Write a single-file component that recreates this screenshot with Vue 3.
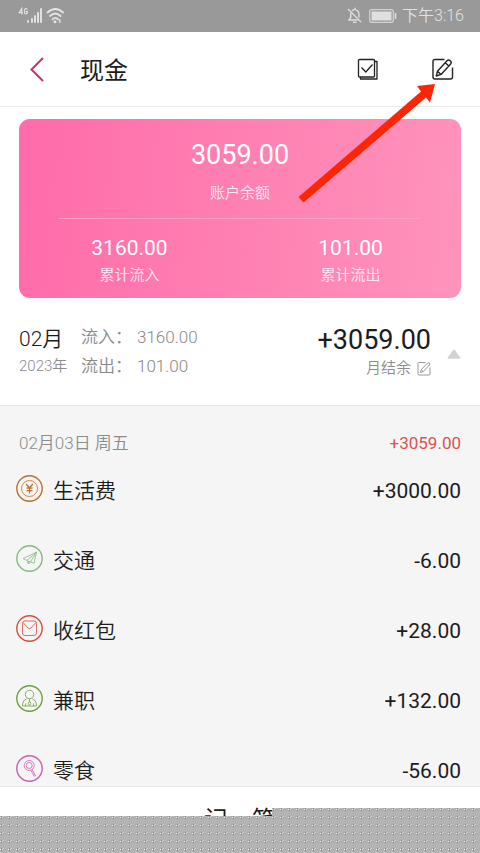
<script setup>
const account = { name: '现金', balance: '3059.00', inflow: '3160.00', outflow: '101.00' }
const month = { month: '02月', year: '2023年', inflow: '3160.00', outflow: '101.00', net: '+3059.00' }
const day = { date: '02月03日 周五', total: '+3059.00' }
const records = [
  { name: '生活费', amount: '+3000.00', icon: 'money', color: '#b9702f' },
  { name: '交通', amount: '-6.00', icon: 'plane', color: '#82bd7c' },
  { name: '收红包', amount: '+28.00', icon: 'envelope', color: '#d2503c' },
  { name: '兼职', amount: '+132.00', icon: 'person', color: '#6f9f42' },
  { name: '零食', amount: '-56.00', icon: 'candy', color: '#c85fb4' }
]
</script>

<template>
  <div class="screen">
    <div class="status">
      <div class="status-side">
        <svg width="48" height="20" viewBox="0 0 48 20" aria-hidden="true">
          <g fill="none" stroke="#e6e6e6" stroke-width="1.1">
            <path d="M3.8 8.5V2.5L1.2 6.8H5" />
            <path d="M9.2 3.6Q9 2.5 8 2.5Q6.6 2.5 6.6 4.2V6.3Q6.6 8 8 8Q9.4 8 9.4 6.2V5.6H8" />
          </g>
          <g fill="#e0e0e0">
            <rect x="9" y="14" width="2" height="3" rx="1" />
            <rect x="13" y="12" width="2" height="5" rx="1" />
            <rect x="16" y="9" width="2" height="8" rx="1" />
            <rect x="19" y="6" width="2" height="11" rx="1" />
            <rect x="22" y="2" width="2" height="15" rx="1" />
          </g>
          <g fill="none" stroke="#e6e6e6" stroke-width="1.8" stroke-linecap="round">
            <path d="M29.500 6.500Q37.500 -.5 45 6.500" />
            <path d="M32 10Q37.500 5 42.500 10" />
            <path d="M34.500 13.300Q37.500 10.500 40 13.300" />
          </g>
          <circle cx="37" cy="15.800" r="1.500" fill="#e6e6e6" />
          <path d="M41.800 13V17" stroke="#e0e0e0" stroke-width="1.400" />
        </svg>
      </div>
      <div class="status-side">
        <svg width="16" height="18" viewBox="0 0 16 18" fill="none" stroke="#dedede" stroke-width="1.400" aria-hidden="true">
          <path d="M1 2L14 15M5 3.600Q8 1.500 10.800 4Q12 5.200 12 8V10.500M3.700 6V10.500L2 13H10.500M6 15.200H9.500M8 .8V2.500" />
        </svg>
        <svg class="battery" width="28" height="14" viewBox="0 0 28 14" aria-hidden="true">
          <rect x=".7" y=".7" width="23.600" height="12.600" rx="2" fill="none" stroke="#d4d4d4" stroke-width="1.200" />
          <rect x="2.500" y="2.500" width="20" height="9" fill="#e0e0e0" />
          <path d="M26.500 4V10" stroke="#dedede" stroke-width="1.600" />
        </svg>
        <span class="clock">下午3:16</span>
      </div>
    </div>

    <header class="bar">
      <button class="icon-button" aria-label="返回">
        <svg width="16" height="26" viewBox="0 0 16 26" fill="none" stroke="#cf3160" stroke-width="2">
          <path d="M13 2L1.500 13.500L13 25" />
        </svg>
      </button>
      <h1 class="title">{{ account.name }}</h1>
      <button class="icon-button" aria-label="多选">
        <svg width="22" height="24" viewBox="0 0 22 24" fill="none" stroke="#222" stroke-width="1.300" stroke-linejoin="round">
          <rect x="1.500" y="2.500" width="16" height="17.500" rx="1" />
          <path d="M3.500 20V22H20V4.500H17.500M4.500 10.500L8.800 15L15.500 7.500" />
        </svg>
      </button>
      <button class="icon-button edit-button" aria-label="编辑账户">
        <svg width="22" height="24" viewBox="0 0 22 24" fill="none" stroke="#222" stroke-width="1.400" stroke-linejoin="round">
          <path d="M12.500 2.500H3Q1 2.500 1 4.500V20Q1 22 3 22H18.500Q20.500 22 20.500 20V10.500" />
          <path d="M4.300 19L5.500 14.200L15 3.800Q16.500 2.200 18.300 3.800Q20 5.200 18.700 7L9 17.400ZM5.500 14.200L9 17.400M13.300 5.700L16.800 9" />
        </svg>
      </button>
    </header>

    <section class="card-area">
      <div class="card">
        <strong class="balance">{{ account.balance }}</strong>
        <span class="card-label">账户余额</span>
        <div class="flows">
          <div class="flow">
            <strong class="flow-value">{{ account.inflow }}</strong>
            <span class="card-label">累计流入</span>
          </div>
          <div class="flow">
            <strong class="flow-value">{{ account.outflow }}</strong>
            <span class="card-label">累计流出</span>
          </div>
        </div>
      </div>
    </section>

    <section class="month">
      <div class="month-date">
        <span class="month-name">{{ month.month }}</span>
        <span class="small">{{ month.year }}</span>
      </div>
      <dl class="totals">
        <dt>流入：</dt>
        <dd>{{ month.inflow }}</dd>
        <dt>流出：</dt>
        <dd>{{ month.outflow }}</dd>
      </dl>
      <div class="net">
        <span class="net-value">{{ month.net }}</span>
        <button class="net-edit">
          月结余
          <svg width="14" height="15" viewBox="0 0 14 15" fill="none" stroke="#999" stroke-width="1" aria-hidden="true">
            <path d="M8.500 1.500H2Q1 1.500 1 2.500V13Q1 14 2 14H12Q13 14 13 13V6.500" />
            <path d="M3.500 11.500L4.300 8.700L10.500 2Q11.400 1.200 12.400 2Q13.300 2.800 12.500 3.800L6.300 10.600ZM4.300 8.700L6.300 10.600" />
          </svg>
        </button>
      </div>
      <button class="collapse" aria-label="收起">
        <svg width="14" height="10" viewBox="0 0 14 10" fill="#d2d2d2">
          <path d="M.8 8.500Q0 9.700 1.500 9.700H12.500Q14 9.700 13.200 8.500L8 1.200Q7 0 6 1.200Z" />
        </svg>
      </button>
    </section>

    <main class="records">
      <div class="day">
        <span>{{ day.date }}</span>
        <span class="day-total">{{ day.total }}</span>
      </div>
      <ul class="list">
        <li v-for="record in records" :key="record.name" class="record">
          <svg class="record-icon" width="27" height="27" viewBox="0 0 27 27" fill="none" :stroke="record.color" stroke-width=".8" stroke-linejoin="round" aria-hidden="true">
            <circle cx="13.500" cy="13.500" r="12.700" stroke-width="1.400" />
            <g v-if="record.icon === 'money'">
              <circle cx="13.500" cy="13.500" r="8" />
              <path d="M10.200 9L13.500 13L16.800 9M13.500 13V18.500M10.500 13.200H16.500M10.500 15.700H16.500" stroke-width="1.200" />
            </g>
            <path v-else-if="record.icon === 'plane'" d="M20.500 7.200L7 13.600L11 15.400L12.500 19L14.500 16.900L18 18.200ZM20.500 7.200L11 15.400M20.500 7.200L14.500 16.900L12.500 16.200V19" />
            <g v-else-if="record.icon === 'envelope'">
              <rect x="6.500" y="6" width="14" height="14.500" rx="2.500" />
              <path d="M7 7.500L12 13Q13.500 14.500 15 13L20 7.500" />
            </g>
            <g v-else-if="record.icon === 'person'">
              <circle cx="13.500" cy="9.500" r="4.200" />
              <path d="M10.800 13.800Q7 15 6.500 19V21H20.500V19Q20 15 16.200 13.800M13.500 14V15.500L12.300 18.500L13.500 20.500L14.700 18.500L13.500 15.500M9.500 21V18.500M17.500 21V18.500" />
            </g>
            <g v-else>
              <circle cx="13.200" cy="10.500" r="5" />
              <circle cx="13.200" cy="10.500" r="3" />
              <path d="M14.600 15.200L18.500 21.200L19.500 20.600L16 14.600" />
            </g>
          </svg>
          <span class="record-name">{{ record.name }}</span>
          <span class="record-amount">{{ record.amount }}</span>
        </li>
      </ul>
    </main>

    <footer class="footer">
      <button class="add">记一笔</button>
      <svg class="mask" width="100%" height="45" aria-hidden="true">
        <defs>
          <pattern id="grain" width="8" height="8" patternUnits="userSpaceOnUse">
            <rect width="8" height="8" fill="#b2b2b2" />
            <path d="M0 1h1v1h-1zM2 1h1v1h-1zM3 0h1v1h-1z" fill="#dedede" />
            <path d="M1 0h1v1h-1zM1 2h1v1h-1zM3 1h1v1h-1z" fill="#8c8c8c" />
            <path d="M4 4h1v1h-1zM6 4h1v1h-1zM5 5h1v1h-1zM7 5h1v1h-1zM4 6h1v1h-1zM6 6h1v1h-1zM1 5h1v1h-1zM5 1h1v1h-1z" fill="#b9b9b9" />
          </pattern>
        </defs>
        <rect y="8" width="272" height="37" fill="url(#grain)" />
        <rect x="272" width="100%" height="45" fill="url(#grain)" />
      </svg>
    </footer>

    <svg class="arrow" width="140" height="122" viewBox="0 0 140 122" aria-hidden="true">
      <path d="M138 2L133 20.500L129 15.500L6.500 120.500L1.500 115L124 9.500L120 4Z" fill="#fd2604" />
    </svg>
  </div>
</template>

<style>
body {
  margin: 0;
}
</style>

<style scoped>
.screen {
  position: relative;
  display: flex;
  flex-direction: column;
  height: 100vh;
  overflow: hidden;
  background: #fff;
  color: #1c1c1c;
  font-family: Roboto, "Noto Sans CJK SC", sans-serif;
  font-weight: 400;
}

svg {
  display: block;
  flex: none;
}

button {
  padding: 0;
  border: 0;
  background: none;
  color: inherit;
  font: inherit;
  cursor: pointer;
}

strong {
  font-weight: 400;
}

.status {
  display: flex;
  justify-content: space-between;
  align-items: center;
  height: 32px;
  padding: 0 16px 0 18px;
  background: #999;
}

.status-side {
  display: flex;
  align-items: center;
}

.battery {
  margin: 0 5px 0 6px;
}

.clock {
  color: #e2e2e2;
  font-size: 16px;
  font-weight: 350;
  line-height: 24px;
}

.bar {
  display: flex;
  align-items: center;
  height: 74px;
  padding: 0 26px 0 30px;
  border-bottom: 1px solid #ececec;
}

.title {
  flex: 1;
  margin: 0 0 0 34px;
  padding-top: 3px;
  font-size: 24px;
  font-weight: 400;
  line-height: 32px;
}

.edit-button {
  margin-left: 53px;
}

.card-area {
  padding: 12px 19px 0;
}

.card {
  display: flex;
  flex-direction: column;
  align-items: center;
  padding: 18px 0 11px;
  border-radius: 11px;
  background: linear-gradient(95deg, #ff6ba9, #fe94bb);
  color: #fff;
}

.balance {
  font-size: 27px;
  line-height: 36px;
}

.card-label {
  color: #ffe6f2;
  font-size: 15px;
  font-weight: 350;
  line-height: 24px;
}

.balance + .card-label {
  margin-top: 8px;
}

.flows {
  position: relative;
  display: flex;
  align-self: stretch;
  margin-top: 13px;
  padding-top: 15px;
}

.flows::before {
  content: "";
  position: absolute;
  top: 0;
  left: 40px;
  right: 40px;
  height: 1px;
  background: #ff9dc9;
}

.flow {
  display: flex;
  flex: 1;
  flex-direction: column;
  align-items: center;
}

.flow-value {
  font-size: 21px;
  line-height: 30px;
}

.month {
  display: flex;
  align-items: flex-start;
  height: 82px;
  padding: 25px 19px 0;
  border-bottom: 1px solid #e6e6e6;
}

.month-date {
  display: flex;
  flex-direction: column;
  width: 62px;
}

.month-name {
  font-size: 21px;
  font-weight: 350;
  line-height: 32px;
}

.small {
  color: #8c8c8c;
  font-size: 15px;
  font-weight: 350;
  line-height: 22px;
}

.totals {
  display: grid;
  grid-template-columns: 56px auto;
  margin: 0;
  color: #888;
  font-size: 17px;
  font-weight: 350;
  line-height: 29px;
}

.totals dd {
  margin: 0;
}

.net {
  display: flex;
  flex: 1;
  flex-direction: column;
  align-items: flex-end;
}

.net-value {
  font-size: 27px;
  line-height: 35px;
}

.net-edit {
  display: flex;
  align-items: center;
  gap: 6px;
  color: #8c8c8c;
  font-size: 15px;
  font-weight: 350;
  line-height: 20px;
}

.collapse {
  margin: 26px 0 0 16px;
}

.records {
  flex: 1;
  min-height: 0;
  overflow-y: auto;
  scrollbar-width: none;
  background: #f5f5f5;
}

.day {
  display: flex;
  justify-content: space-between;
  padding: 25px 19px 1px;
  color: #8c8c8c;
  font-size: 17px;
  font-weight: 350;
  line-height: 24px;
}

.day-total {
  color: #d9534f;
  font-weight: 400;
}

.list {
  margin: 0;
  padding: 0;
  list-style: none;
}

.record {
  display: flex;
  align-items: center;
  height: 70px;
  padding: 0 19px 0 16px;
}

.record-icon {
  margin: 0 10px 6px 0;
}

.record-name {
  flex: 1;
  font-size: 21px;
  font-weight: 350;
  line-height: 32px;
}

.record-amount {
  font-size: 21px;
  line-height: 32px;
}

.footer {
  position: relative;
  display: flex;
  height: 66px;
  border-top: 1px solid #e8e8e8;
  background: #fff;
}

.add {
  flex: 1;
  font-size: 24px;
  line-height: 32px;
}

.mask {
  position: absolute;
  left: 0;
  bottom: 0;
}

.arrow {
  position: absolute;
  top: 82px;
  right: 43px;
  pointer-events: none;
}
</style>
